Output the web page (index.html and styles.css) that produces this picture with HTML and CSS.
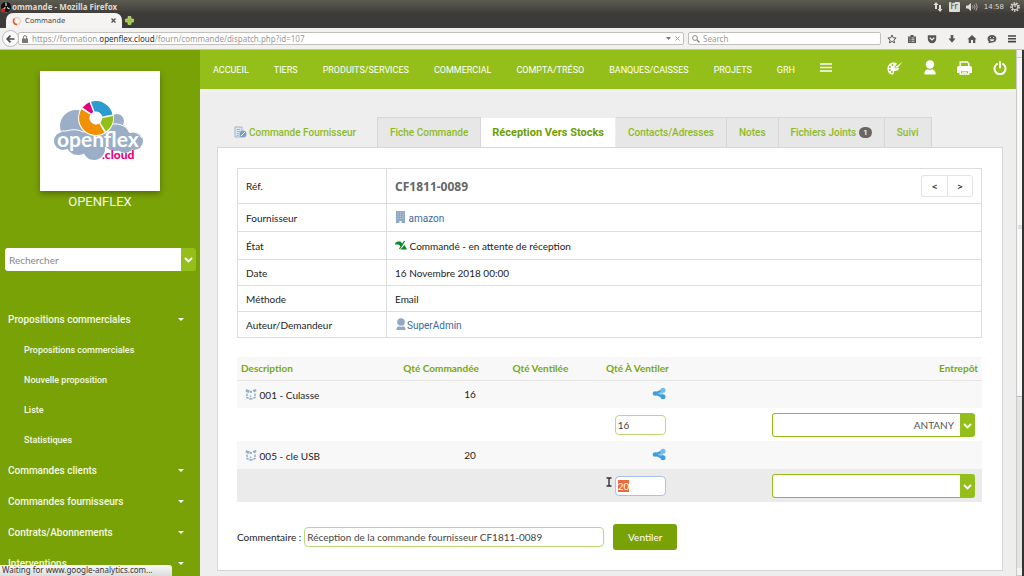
FILE: index.html
```html
<!DOCTYPE html>
<html lang="fr">
<head>
<meta charset="utf-8">
<title>Commande</title>
<link rel="stylesheet" href="styles.css">
</head>
<body>
<div class="window">
  <header class="chrome">
    <div class="titlebar">
      <svg class="app-icon" viewBox="0 0 12 12"><circle cx="6" cy="6" r="5.6" fill="#111" stroke="#777" stroke-width=".6"/><path d="M6 5V1.5M5.500 6.500L2.500 8.500M7 6.500L9.500 8" stroke="#ddd" stroke-width="1.200"/><circle cx="3" cy="9.300" r="2" fill="#e62117"/></svg>
      <span class="window-title">ommande - Mozilla Firefox</span>
      <div class="indicators">
        <svg width="10" height="10" viewBox="0 0 10 10" fill="#dfdbd2"><path d="M3 0L5.500 3H4V7H2V3H.5zM7 10L4.600 7H6V3H8V7H9.500z"/></svg>
        <span class="lang">Fr</span>
        <svg width="12" height="10" viewBox="0 0 12 10"><path d="M0 3.500h2L5 1v8L2 6.500H0z" fill="#dfdbd2"/><path d="M6.500 3.500q1 1.500 0 3M8.200 2.500q1.800 2.500 0 5M10 1.500q2.500 3.500 0 7" fill="none" stroke="#aaa79e"/></svg>
        <span class="clock">14:58</span>
        <svg width="10" height="10" viewBox="0 0 10 10" fill="none" stroke="#dfdbd2"><circle cx="5" cy="5" r="4" stroke-width="1.600" stroke-dasharray="1.600 1.200"/><circle cx="5" cy="5" r="2.800"/><path d="M5 1.500v3.500" stroke-width="1.200"/></svg>
      </div>
    </div>
    <div class="tabstrip">
      <div class="browser-tab">
        <svg width="10" height="10" viewBox="0 0 10 10" fill="none"><circle cx="5" cy="5" r="3.500" stroke="#f3cdbd" stroke-width="1.500"/><path d="M2.500 2.500A3.500 3.500 0 0 0 5 8.500" stroke="#e2592a" stroke-width="1.500"/></svg>
        <span class="browser-tab-label">Commande</span>
        <button class="plain" aria-label="Fermer l'onglet"><svg width="5" height="5" viewBox="0 0 5 5"><path d="M.5.5l4 4m0-4l-4 4" stroke="#555" stroke-width="1.400"/></svg></button>
      </div>
      <button class="plain new-tab" aria-label="Nouvel onglet"><svg width="9" height="9" viewBox="0 0 9 9"><path d="M3 .5h3V3h2.500v3H6v2.500H3V6H.5V3H3z" fill="#9bc93d" stroke="#d5e6a8" stroke-width=".6"/></svg></button>
    </div>
    <div class="toolbar">
      <button class="back" aria-label="Précédent"><svg width="9" height="8" viewBox="0 0 9 8"><path d="M4.500.7L1.200 4l3.300 3.300M1.500 4H8.500" fill="none" stroke="#4b4b4b" stroke-width="1.700"/></svg></button>
      <div class="address">
        <svg width="6" height="8" viewBox="0 0 6 8"><path d="M1.400 4V2.200a1.600 1.600 0 0 1 3.200 0V4" fill="none" stroke="#777"/><path d="M0 3.500h6V8H0z" fill="#777"/></svg>
        <span class="url">https://formation.<b>openflex.cloud</b>/fourn/commande/dispatch.php?id=107</span>
        <svg width="5" height="3" viewBox="0 0 5 3"><path d="M0 0h5L2.500 3z" fill="#777"/></svg>
        <svg width="5" height="5" viewBox="0 0 5 5"><path d="M.5.5l4 4m0-4l-4 4" stroke="#999"/></svg>
      </div>
      <label class="search">
        <svg width="8" height="8" viewBox="0 0 8 8" fill="none" stroke="#888"><circle cx="3" cy="3" r="2.400"/><path d="M4.800 4.800L7.500 7.500" stroke-width="1.300"/></svg>
        <input type="search" placeholder="Search" aria-label="Search">
      </label>
      <div class="tools">
        <svg viewBox="0 0 10 10"><path d="M5 1l1.200 2.700 2.900.3-2.200 2 .6 2.900L5 7.400 2.500 8.900l.6-2.900L.9 4l2.900-.3z" fill="none" stroke="#555"/></svg>
        <svg viewBox="0 0 10 10"><path d="M1 2.500h2.500V1h3v1.500H9V9H1z" fill="#555"/><path d="M4.500 4h3M4.500 5.700h3M4.500 7.400h3M2.400 4h1M2.400 5.700h1M2.400 7.400h1" stroke="#eee" stroke-width=".8"/></svg>
        <svg viewBox="0 0 10 10"><path d="M.8 1.200h8.400V5a4.200 4.200 0 0 1-8.400 0z" fill="#555"/><path d="M2.700 3.800L5 6l2.300-2.200" fill="none" stroke="#eee" stroke-width="1.200"/></svg>
        <svg viewBox="0 0 10 10"><path d="M3.700 1h2.600v3.500h2.200L5 8.800 1.500 4.500h2.200z" fill="#555"/></svg>
        <svg viewBox="0 0 10 10"><path d="M5 1l4.500 4.200H8.300V9H6V6H4v3H1.700V5.200H.5z" fill="#555"/></svg>
        <svg viewBox="0 0 10 10"><path d="M5 1c2.600 0 4.400 1.500 4.400 3.700S7.600 8.400 5 8.400L1.500 9.300l.4-1.700C1 6.900.6 5.900.6 4.700.6 2.500 2.400 1 5 1z" fill="#555"/><path d="M2.500 5.300h5q-.7 2-2.500 2t-2.500-2z" fill="#eee"/><path d="M3.400 3v1M6.600 3v1" stroke="#eee"/></svg>
        <svg class="menu-icon" viewBox="0 0 10 10"><path d="M1 2h8M1 4.800h8M1 7.600h8" stroke="#444" stroke-width="1.600"/></svg>
      </div>
    </div>
  </header>

  <div class="viewport">
    <aside class="sidebar">
      <div class="brand">
        <div class="logo">
          <svg viewBox="0 0 120 120" role="img" aria-label="openflex.cloud">
            <g fill="#9aaec8"><circle cx="36" cy="55" r="16"/><circle cx="23" cy="70" r="9"/><circle cx="38" cy="72" r="12"/><circle cx="54" cy="78" r="11"/><circle cx="76" cy="66" r="14"/><circle cx="94" cy="70" r="9"/><circle cx="77" cy="50" r="7"/><circle cx="85" cy="73" r="9"/><path d="M24 62h70v14H24z"/></g>
            <path d="M15 64q4-5 11-4q10-3 17 1q8-2 14 4q7-14 21-12q9 2 11 8q9-1 13 6" fill="none" stroke="#fff" stroke-width="1"/>
            <circle cx="56" cy="47" r="18" fill="#fff"/>
            <path d="M41.400 38.300A17 17 0 0 0 64.500 61.700L59.300 52.600A6.500 6.500 0 0 1 50.400 43.700z" fill="#ef9100"/>
            <path d="M42.500 36.500A17 17 0 0 1 49.500 31.200L53.200 41 51.200 42.500z" fill="#e5007d"/>
            <path d="M51 30.700A17 17 0 0 1 72.500 43.500L62.300 45.500A6.500 6.500 0 0 0 54.500 40.600z" fill="#2b9cd0"/>
            <path d="M73 45A17 17 0 0 1 66 60.500L60.500 52 62.500 47z" fill="#94bf1a"/>
            <text x="17" y="76" class="logo-name">openflex</text>
            <text x="62" y="88" class="logo-tld">.cloud</text>
          </svg>
        </div>
        <div class="company">OPENFLEX</div>
      </div>
      <div class="side-search">
        <input type="text" placeholder="Rechercher" aria-label="Rechercher">
        <button aria-label="Choisir la recherche"><svg width="9" height="6" viewBox="0 0 9 6"><path d="M1 1l3.500 3.500L8 1" fill="none" stroke="#fff" stroke-width="1.800"/></svg></button>
      </div>
      <nav class="side-menu">
        <a class="group" href="#">Propositions commerciales</a>
        <a class="item" href="#">Propositions commerciales</a>
        <a class="item" href="#">Nouvelle proposition</a>
        <a class="item" href="#">Liste</a>
        <a class="item" href="#">Statistiques</a>
        <a class="group" href="#">Commandes clients</a>
        <a class="group" href="#">Commandes fournisseurs</a>
        <a class="group" href="#">Contrats/Abonnements</a>
        <a class="group" href="#">Interventions</a>
      </nav>
    </aside>

    <main class="main">
      <nav class="topnav">
        <a href="#">ACCUEIL</a><a href="#">TIERS</a><a href="#">PRODUITS/SERVICES</a><a href="#">COMMERCIAL</a><a href="#">COMPTA/TRÉSO</a><a href="#">BANQUES/CAISSES</a><a href="#">PROJETS</a><a href="#">GRH</a>
        <a class="burger" href="#" aria-label="Menu"><svg width="12" height="9" viewBox="0 0 12 9"><path d="M0 1h12M0 4.500h12M0 8h12" stroke="#fff" stroke-width="1.400"/></svg></a>
        <div class="actions">
          <a href="#" aria-label="Thème"><svg width="16" height="14" viewBox="0 0 16 14"><path d="M6 1.500C2.500 2 .3 4.500.5 8c.1 3.500 2.500 5.700 5 5.500 1.700-.1 1-2 1.500-3s3.500-.3 4.500-2c.4-.8.300-1.500 0-2L9 7.500 7.500 6.800 8 5l2-2.300C9 1.700 7.500 1.300 6 1.500z" fill="#fff"/><path d="M8.200 6.500q.6-2 2.300-1.800L15.500.7l-4 5q-1.300 1.300-3.300.8z" fill="#fff"/><g fill="#94bf1a"><circle cx="5.500" cy="4" r="1"/><circle cx="2.900" cy="6" r="1"/><circle cx="2.800" cy="9" r="1"/><circle cx="4.900" cy="11" r="1"/></g></svg></a>
          <a href="#" aria-label="Utilisateur"><svg width="12" height="15" viewBox="0 0 12 15" fill="#fff"><circle cx="6" cy="4.500" r="4.200"/><path d="M.5 14.500V12.500Q1 10 3.500 9.300 6 10.700 8.500 9.300 11 10 11.500 12.500v2z"/></svg></a>
          <a href="#" aria-label="Imprimer"><svg width="15" height="14" viewBox="0 0 15 14"><path d="M3.200 5V1h7l1.600 1.600V5" fill="none" stroke="#fff" stroke-width="1.400"/><path d="M0 7q0-2 2-2h11q2 0 2 2v5h-2.500V9.500h-10V12H0z" fill="#fff"/><path d="M3.200 9.500h8.600V13H3.200z" fill="none" stroke="#fff" stroke-width="1.400"/><path d="M5 11.300h5" stroke="#fff"/></svg></a>
          <a href="#" aria-label="Déconnexion"><svg width="14" height="14" viewBox="0 0 14 14" fill="none" stroke="#fff" stroke-width="2" stroke-linecap="round"><path d="M4 3A5.500 5.500 0 1 0 10 3M7 1v5.500"/></svg></a>
        </div>
      </nav>

      <div class="content">
        <nav class="tabs">
          <span class="tabs-title"><svg width="13" height="13" viewBox="0 0 13 13"><path d="M1 1h7v10H1z" fill="#dde7f1" stroke="#9fb7cf"/><path d="M2.800 3.500h3.400M2.800 5.500h3.400M2.800 7.500h2M2.800 9.500h2" stroke="#9fb7cf"/><circle cx="9" cy="8" r="3.500" fill="#7f9fc0"/><path d="M7 10l4-4" stroke="#fff"/></svg>Commande Fournisseur</span>
          <a class="tab" href="#">Fiche Commande</a>
          <a class="tab active" href="#" aria-current="page">Réception Vers Stocks</a>
          <a class="tab" href="#">Contacts/Adresses</a>
          <a class="tab" href="#">Notes</a>
          <a class="tab" href="#">Fichiers Joints <span class="count">1</span></a>
          <a class="tab" href="#">Suivi</a>
        </nav>

        <section class="panel">
          <table class="info">
            <tr class="ref-row"><th scope="row">Réf.</th><td><div class="ref"><strong>CF1811-0089</strong><span class="pager"><button aria-label="Précédent">&lt;</button><button aria-label="Suivant">&gt;</button></span></div></td></tr>
            <tr class="tall"><th scope="row">Fournisseur</th><td><a href="#"><svg width="11" height="13" viewBox="0 0 11 13"><path d="M1 0h9v12H6.500V10h-2v2H1z" fill="#8fa9c6"/><path d="M3 1v8M5.500 1v8M8 1v8" stroke="#bccbdc" stroke-dasharray="1 1"/></svg> amazon</a></td></tr>
            <tr class="tall"><th scope="row">État</th><td><svg width="12" height="11" viewBox="0 0 12 11"><path d="M0 3.500Q0 1 3 .5h2.500L8 3.500 6 5.500 3.500 3.500z" fill="#0a8a1b"/><path d="M9.500 0L4.500 8" stroke="#0a8a1b" stroke-width="1.200"/><path d="M9.500 4L12 8.500H5.500z" fill="#0a8a1b"/></svg> Commandé - en attente de réception</td></tr>
            <tr><th scope="row">Date</th><td>16 Novembre 2018 00:00</td></tr>
            <tr><th scope="row">Méthode</th><td>Email</td></tr>
            <tr><th scope="row">Auteur/Demandeur</th><td><a href="#"><svg width="12" height="13" viewBox="0 0 12 13" fill="#8fa9c6"><circle cx="6" cy="4" r="3.800"/><path d="M1.500 12v-1.500Q2 8.500 4 8.300q2 1 4 0 2.200.2 2.500 2.200V12z"/></svg>SuperAdmin</a></td></tr>
          </table>

          <form>
            <table class="lines">
              <thead><tr><th class="c-desc" scope="col">Description</th><th class="c-qty" scope="col">Qté Commandée</th><th class="c-done" scope="col">Qté Ventilée</th><th class="c-todo" scope="col">Qté À Ventiler</th><th class="c-store" scope="col">Entrepôt</th></tr></thead>
              <tbody>
                <tr class="product"><td><svg width="12" height="12" viewBox="0 0 12 12"><path d="M1 1l4 1.500L3.500 5 .5 3.500zM11 1L7.500 2 9 4.500l2.500-1.500zM5.200 2.800L7 3v2L4.500 4.800z" fill="#94afcb"/><path d="M2 5.500v4L5.500 11V7.500M10 5.500v4L6.500 11" fill="none" stroke="#94afcb" stroke-width="1.500" stroke-dasharray="2.500 .8"/></svg> 001 - Culasse</td><td>16</td><td></td><td><button type="button" class="plain" aria-label="Ventiler 001"><svg width="14" height="13" viewBox="0 0 14 13"><path d="M2 6.500L11 2v9z" fill="#8fcaf0"/><path d="M3 6.500L11 3M3 6.500L11 10" stroke="#3f9fdc" stroke-width="2.200"/><g fill="#3f9fdc"><circle cx="3" cy="6.500" r="2.300"/><circle cx="11" cy="3.200" r="2.500" fill="#72bceb"/><circle cx="11" cy="9.800" r="2.500"/></g></svg></button></td><td></td></tr>
                <tr class="entry"><td colspan="3"></td><td><input class="field qty" type="text" value="16" aria-label="Quantité 001"></td><td><span class="pick"><select aria-label="Entrepôt 001"><option>ANTANY</option></select><svg width="9" height="6" viewBox="0 0 9 6"><path d="M1 1l3.500 3.500L8 1" fill="none" stroke="#fff" stroke-width="1.800"/></svg></span></td></tr>
                <tr class="product"><td><svg width="12" height="12" viewBox="0 0 12 12"><path d="M1 1l4 1.500L3.500 5 .5 3.500zM11 1L7.500 2 9 4.500l2.500-1.500zM5.200 2.800L7 3v2L4.500 4.800z" fill="#94afcb"/><path d="M2 5.500v4L5.500 11V7.500M10 5.500v4L6.500 11" fill="none" stroke="#94afcb" stroke-width="1.500" stroke-dasharray="2.500 .8"/></svg> 005 - cle USB</td><td>20</td><td></td><td><button type="button" class="plain" aria-label="Ventiler 005"><svg width="14" height="13" viewBox="0 0 14 13"><path d="M2 6.500L11 2v9z" fill="#8fcaf0"/><path d="M3 6.500L11 3M3 6.500L11 10" stroke="#3f9fdc" stroke-width="2.200"/><g fill="#3f9fdc"><circle cx="3" cy="6.500" r="2.300"/><circle cx="11" cy="3.200" r="2.500" fill="#72bceb"/><circle cx="11" cy="9.800" r="2.500"/></g></svg></button></td><td></td></tr>
                <tr class="entry hover"><td colspan="3"></td><td><span class="pointer-host"><svg class="ibeam" viewBox="0 0 6 10"><path d="M.5 1h5M.5 9h5M3 1v8" stroke="#333" stroke-width="1.400"/></svg><input class="field qty" id="current-qty" type="text" value="20" aria-label="Quantité 005"></span></td><td><span class="pick"><select aria-label="Entrepôt 005"><option></option></select><svg width="9" height="6" viewBox="0 0 9 6"><path d="M1 1l3.500 3.500L8 1" fill="none" stroke="#fff" stroke-width="1.800"/></svg></span></td></tr>
              </tbody>
            </table>
            <div class="comment">
              <label for="comment">Commentaire :</label>
              <input class="field note" id="comment" type="text" value="Réception de la commande fournisseur CF1811-0089">
              <button class="submit" type="button">Ventiler</button>
            </div>
          </form>
        </section>
      </div>
    </main>
    <div class="scroll"><span class="scroll-end"></span><div class="thumb"><span></span></div><div class="track"></div><span class="scroll-end"></span></div>
    <div class="status">Waiting for www.google-analytics.com...</div>
  </div>
</div>
<script src="script.js"></script>
</body>
</html>
```

FILE: styles.css
```css
* { box-sizing: border-box; }
html, body { margin: 0; height: 100%; }
body { font-family: Lato, "Noto Sans", sans-serif; font-size: 10px; color: #222; overflow: hidden; }
a { color: inherit; text-decoration: none; }
svg { display: block; flex: none; }
button, input, select { font: inherit; color: inherit; margin: 0; }
.plain { background: none; border: 0; padding: 0; }
.window { height: 100vh; display: flex; flex-direction: column; }

/* browser frame */
.chrome { font-family: "DejaVu Sans", sans-serif; font-size: 8px; flex: none; background: linear-gradient(#5d5c51, #3c3b37 14px); }
.titlebar { height: 13px; display: flex; align-items: center; color: #dfdbd2; }
.app-icon { width: 12px; height: 12px; }
.window-title { font: bold 8px "Noto Sans", sans-serif; }
.indicators { margin-left: auto; display: flex; align-items: center; gap: 6px; padding-right: 4px; }
.lang { background: #dfdbd2; color: #444; padding: 0 2px; line-height: 10px; border-radius: 1px; }
.clock { font-size: 7px; }
.tabstrip { height: 15px; display: flex; align-items: center; }
.browser-tab { height: 15px; width: 116px; margin-left: 6px; padding: 0 6px; display: flex; align-items: center; gap: 3px; background: #f5f4f2; color: #444; border-radius: 7px 7px 0 0; }
.browser-tab-label { flex: 1; font-size: 7px; }
.new-tab { margin-left: 3px; }
.toolbar { height: 22px; display: flex; align-items: center; gap: 4px; padding: 0 7px 0 2px; background: #f2f1f0; border-bottom: 1px solid #c5c3be; color: #999; }
.back { width: 17px; height: 17px; padding: 0; display: grid; place-items: center; border: 1px solid #bbb; border-radius: 50%; background: #fafafa; }
.address, .search { height: 13px; display: flex; align-items: center; background: #fff; border: 1px solid #c2c0bc; border-radius: 2px; }
.address { flex: 1; gap: 4px; padding: 0 3px; margin-left: -5px; }
.url { flex: 1; white-space: nowrap; font: 8px "Noto Sans", sans-serif; }
.url b { font-weight: normal; color: #333; }
.search { width: 193px; gap: 3px; padding: 0 3px; }
.search input { flex: 1; min-width: 0; border: 0; padding: 0; background: none; outline: 0; font: 8px "Noto Sans", sans-serif; }
.search input::placeholder { color: #999; opacity: 1; }
.tools { display: flex; gap: 10px; padding-left: 2px; }
.tools svg { width: 10px; height: 10px; }

/* page */
.viewport { flex: 1; min-height: 0; display: flex; position: relative; border-right: 2px solid #333; background: #eee; }
.sidebar { width: 200px; flex: none; background: #79a206; color: #f4f9e4; font-family: Roboto, sans-serif; overflow: hidden; padding-top: 21px; }
.brand { display: grid; justify-items: center; gap: 3px; }
.logo { width: 120px; height: 120px; background: #fff; box-shadow: 0 3px 6px rgba(0, 0, 0, .3); }
.logo-name { font: bold 21px Lato, sans-serif; fill: #fff; }
.logo-tld { font: 900 12px Lato, sans-serif; fill: #e5007d; }
.company { font-size: 13px; line-height: 16px; }
.side-search { display: flex; margin: 38px 4px 33px 5px; height: 23px; border-radius: 3px; overflow: hidden; }
.side-search input { flex: 1; min-width: 0; border: 0; padding: 0 4px; background: #fff; font-family: Lato, sans-serif; }
.side-search input::placeholder { color: #888; opacity: 1; }
.side-search button { width: 15px; padding: 0; border: 0; background: #94bf1a; display: grid; place-items: center; }
.side-menu { font-weight: 500; }
.side-menu a { display: flex; align-items: center; }
.side-menu .group { height: 31px; padding: 0 16px 0 8px; justify-content: space-between; font-size: 10px; }
.side-menu .group::after { content: ""; border: 3px solid transparent; border-top-color: #fff; border-bottom: 0; }
.side-menu .item { height: 30px; padding-left: 24px; font-size: 9px; }
.main { flex: 1; min-width: 0; overflow: hidden; }
.topnav { height: 39px; display: flex; align-items: center; gap: 25px; padding: 0 9px 0 13px; background: #94bf1a; color: #fff; font: 9px Roboto, sans-serif; }
.burger { padding: 0 0 4px; }
.actions { margin-left: auto; display: flex; align-items: center; gap: 21px; padding-bottom: 4px; }
.content { padding: 28px 13px 0 17px; }
.tabs { display: flex; font: 500 10px Roboto, sans-serif; color: #8dba1e; }
.tabs-title { flex: 0 0 160px; display: flex; align-items: center; gap: 2px; padding-left: 17px; }
.tab { height: 30px; display: flex; align-items: center; gap: 3px; padding: 0 12px; background: #e7e7e7; border: 1px solid #d6d6d6; border-width: 1px 1px 0 0; }
.tab:nth-child(2) { border-left-width: 1px; }
.tab.active { background: #fff; color: #6d9e00; font-size: 11px; font-weight: bold; padding: 0 11px; border-color: #eee; }
.count { background: #666; color: #fff; font-size: 8px; line-height: 11px; padding: 0 4px; border-radius: 6px; }
.panel { background: #fff; border: 1px solid #d6d6d6; padding: 20px 20px 20px 19px; }

table { width: 100%; border-collapse: collapse; table-layout: fixed; }
.info th, .info td { border: 1px solid #ddd; border-width: 1px 0; padding: 0 8px; height: 26px; text-align: left; font-weight: normal; }
.info th { width: 149px; border-right-width: 1px; }
.info { border: 1px solid #ddd; }
.info .ref-row th, .info .ref-row td { height: 35px; }
.info .tall th, .info .tall td { height: 28px; }
.info svg { display: inline-block; vertical-align: -2px; }
.info a { color: #3b6a9c; font-family: Roboto, sans-serif; }
.ref { display: flex; align-items: center; justify-content: space-between; color: #666; font: 12px "Noto Sans", sans-serif; }
.pager { display: flex; }
.pager button { width: 26px; height: 22px; padding: 0; background: #fff; border: 1px solid #e4e4e4; color: #333; font-size: 9px; font-weight: bold; }
.pager button:first-child { border-radius: 3px 0 0 3px; border-right: 0; }
.pager button:last-child { border-radius: 0 3px 3px 0; }

.lines { margin-top: 19px; }
.lines th { height: 23px; padding: 0 4px; background: #f8f8f8; border-bottom: 1px solid #e6e6e6; color: #76a80f; text-align: right; }
.lines th:first-child { text-align: left; }
.lines td { padding: 0 7px 0 8px; text-align: right; }
.lines td:first-child { text-align: left; }
.lines td svg { display: inline-block; vertical-align: -1px; }
.c-desc { width: 19%; }
.c-qty { width: 14%; }
.c-done { width: 12%; }
.c-todo { width: 13.5%; }
.product td { height: 28px; background: #f8f8f8; }
.entry td { height: 33px; }
.hover td { background: #ebebeb; }
.field { background: #fff; border: 1px solid #bdd77a; border-radius: 4px; height: 20px; padding: 0 2px; color: #444; outline: 0; }
.qty { width: 51px; vertical-align: middle; }
.qty:focus { border-color: #a9c1ec; }
.qty::selection { background: #ee6a3c; color: #fff; }
.pointer-host, .pick { position: relative; display: inline-block; vertical-align: middle; }
.ibeam { position: absolute; left: -9px; top: 1px; width: 6px; height: 10px; }
.pick { width: 69%; }
.pick select { width: 100%; height: 24px; display: block; appearance: none; background: #fff; border: 1px solid #94bf1a; border-right-width: 15px; border-radius: 3px; padding: 0 6px; text-align: right; text-align-last: right; color: #555; }
.pick svg { position: absolute; right: 3px; top: 10px; pointer-events: none; }
.comment { display: flex; align-items: center; margin-top: 22px; }
.note { width: 300px; margin: 0 9px 0 3px; }
.submit { height: 26px; width: 64px; padding: 0; border: 0; border-radius: 3px; background: #79a206; color: #fff; }

.scroll { width: 6px; flex: none; display: flex; flex-direction: column; background: #e4e4e2; border-left: 1px solid #c9c9c7; }
.scroll-end { height: 8px; background: #f2f2f1; border-bottom: 1px solid #ccc; }
.thumb { flex: 340; background: #f7f7f6; border-bottom: 1px solid #bbb; display: grid; place-items: center; }
.thumb span { width: 4px; height: 4px; background: #ddd; }
.track { flex: 172; }
.status { position: absolute; left: 0; bottom: 0; width: 172px; height: 11px; padding-left: 2px; font: 8px/10px "Noto Sans", sans-serif; white-space: nowrap; background: linear-gradient(#fafafa, #dcdcdc); border-top-right-radius: 3px; color: #333; }
```

FILE: script.js
```js
const qty = document.getElementById('current-qty');
qty.focus({ preventScroll: true });
qty.select();
```
